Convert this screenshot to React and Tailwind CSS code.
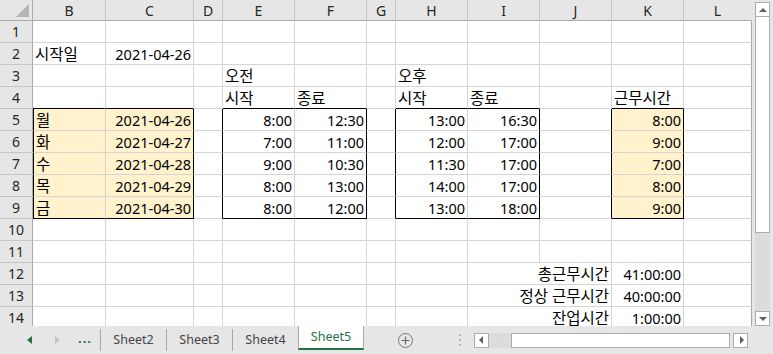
import React from 'react';

const COLS = ['B', 'C', 'D', 'E', 'F', 'G', 'H', 'I', 'J', 'K', 'L'];
const ROWS = [1, 2, 3, 4, 5, 6, 7, 8, 9, 10, 11, 12, 13, 14];

// ranges with a thin black outline
const BOXES = [
  { c1: 0, c2: 1, r1: 5, r2: 9 },
  { c1: 3, c2: 4, r1: 5, r2: 9 },
  { c1: 6, c2: 7, r1: 5, r2: 9 },
  { c1: 9, c2: 9, r1: 5, r2: 9 },
];

const CELLS = {
  '2B': ['시작일'], '2C': ['2021-04-26', 'r'],
  '3E': ['오전'], '3H': ['오후'],
  '4E': ['시작'], '4F': ['종료'], '4H': ['시작'], '4I': ['종료'], '4K': ['근무시간'],
  '5B': ['월'], '5C': ['2021-04-26', 'r'], '5E': ['8:00', 'r'], '5F': ['12:30', 'r'], '5H': ['13:00', 'r'], '5I': ['16:30', 'r'], '5K': ['8:00', 'r'],
  '6B': ['화'], '6C': ['2021-04-27', 'r'], '6E': ['7:00', 'r'], '6F': ['11:00', 'r'], '6H': ['12:00', 'r'], '6I': ['17:00', 'r'], '6K': ['9:00', 'r'],
  '7B': ['수'], '7C': ['2021-04-28', 'r'], '7E': ['9:00', 'r'], '7F': ['10:30', 'r'], '7H': ['11:30', 'r'], '7I': ['17:00', 'r'], '7K': ['7:00', 'r'],
  '8B': ['목'], '8C': ['2021-04-29', 'r'], '8E': ['8:00', 'r'], '8F': ['13:00', 'r'], '8H': ['14:00', 'r'], '8I': ['17:00', 'r'], '8K': ['8:00', 'r'],
  '9B': ['금'], '9C': ['2021-04-30', 'r'], '9E': ['8:00', 'r'], '9F': ['12:00', 'r'], '9H': ['13:00', 'r'], '9I': ['18:00', 'r'], '9K': ['9:00', 'r'],
  '12J': ['총근무시간', 'r'], '12K': ['41:00:00', 'r'],
  '13J': ['정상 근무시간', 'r'], '13K': ['40:00:00', 'r'],
  '14J': ['잔업시간', 'r'], '14K': ['1:00:00', 'r'],
};

const font = { fontFamily: '"Noto Sans", "Noto Sans CJK KR", sans-serif' };

function Cell({ r, c }) {
  const rightBlack = BOXES.some((b) => r >= b.r1 && r <= b.r2 && (c === b.c2 || c + 1 === b.c1));
  const bottomBlack = BOXES.some((b) => c >= b.c1 && c <= b.c2 && (r === b.r2 || r + 1 === b.r1));
  const leftBlack = c === 0 && r >= 5 && r <= 9;
  const yellow = (c <= 1 || c === 9) && r >= 5 && r <= 9;
  const merged = c === 7 && r >= 12;
  const last = c === 10;
  const cell = CELLS[`${r}${COLS[c]}`];
  const right = cell && cell[1] === 'r';
  const hangul = cell && /[가-힣]/.test(cell[0]);

  return (
    <div
      className={[
        'flex items-center min-w-0 whitespace-nowrap border-r border-b leading-[21px] text-black',
        hangul ? 'text-[15.5px]' : 'text-[14.5px]',
        right ? 'justify-end pr-[2px]' : 'justify-start pl-[2px]',
        rightBlack ? 'border-r-black' : merged ? 'border-r-transparent' : last ? 'border-r-[#a6a6a6]' : 'border-r-[#d4d4d4]',
        bottomBlack ? 'border-b-black' : 'border-b-[#d4d4d4]',
        leftBlack ? 'border-l border-l-black' : '',
        yellow ? 'bg-[#fff2cc]' : 'bg-white',
      ].join(' ')}
    >
      {cell ? <span className="leading-[16px]">{cell[0]}</span> : null}
    </div>
  );
}

function Arrow({ dir, color }) {
  return (
    <svg width="5" height="8" viewBox="0 0 5 8">
      {dir === 'left' ? <polygon points="5,0 5,8 0,4" fill={color} /> : <polygon points="0,0 0,8 5,4" fill={color} />}
    </svg>
  );
}

function ScrollButton({ dir }) {
  const pts = {
    up: '2,8 10,8 6,4',
    down: '2,4 10,4 6,8',
    left: '7,2 7,10 3,6',
    right: '5,2 5,10 9,6',
  }[dir];
  return (
    <div className="w-[15px] h-[15px] bg-white border border-[#ababab] flex items-center justify-center">
      <svg width="12" height="12" viewBox="0 0 12 12">
        <polygon points={pts} fill="#606060" />
      </svg>
    </div>
  );
}

export default function App() {
  return (
    <div className="w-[773px] h-[354px] bg-[#e6e6e6] flex flex-col overflow-hidden" style={font}>
      <div className="h-[326px] flex">
        <div className="w-[752px] h-[326px] overflow-hidden">
          <div className="grid grid-cols-[33px_73px_88px_29px_72px_72px_29px_72px_72px_72px_72px_68px] grid-rows-[21px_repeat(14,22px)]">
            <div className="bg-[#e6e6e6] border-r border-b border-[#ababab] flex items-end justify-end pr-[3px] pb-[3px]">
              <svg width="13" height="13" viewBox="0 0 13 13">
                <polygon points="13,0 13,13 0,13" fill="#b4b4b4" />
              </svg>
            </div>
            {COLS.map((k, i) => (
              <div
                key={k}
                className={`bg-[#e6e6e6] border-b border-b-[#ababab] border-r ${i === 10 ? 'border-r-transparent' : 'border-r-[#c6c6c6]'} flex items-center justify-center text-[14px] text-[#262626]`}
              >
                {k}
              </div>
            ))}
            {ROWS.map((r) => (
              <React.Fragment key={r}>
                <div className="bg-[#e6e6e6] border-r border-r-[#ababab] border-b border-b-[#c6c6c6] flex items-center justify-center text-[14px] text-[#262626]">
                  {r}
                </div>
                {COLS.map((k, c) => (
                  <Cell key={k} r={r} c={c} />
                ))}
              </React.Fragment>
            ))}
          </div>
        </div>
        <div className="w-[21px] flex flex-col items-start pl-[3px] pt-[2px] pb-[0px]">
          <ScrollButton dir="up" />
          <div className="w-[15px] h-[216px] bg-white border-x border-[#ababab] border-b" />
          <div className="w-[15px] flex-1 bg-[#dcdcdc]" />
          <ScrollButton dir="down" />
        </div>
      </div>

      <div className="h-[28px] flex items-start text-[12.5px]">
        <div className="w-[100px] h-[28px] flex items-center">
          <div className="ml-[27px] flex items-center"><Arrow dir="left" color="#217346" /></div>
          <div className="ml-[23px] flex items-center"><Arrow dir="right" color="#c4c4c4" /></div>
          <div className="ml-[18px] text-[#217346] font-bold text-[13px] tracking-[1px] leading-none pb-[4px]">...</div>
        </div>
        {['Sheet2', 'Sheet3', 'Sheet4'].map((s) => (
          <div key={s} className="w-[66px] h-[28px] flex items-center">
            <div className="w-px h-[22px] bg-[#a6a6a6]" />
            <div className="flex-1 text-center text-[#444444]">{s}</div>
          </div>
        ))}
        <div className="w-[66px] h-[24px] bg-white border-x border-[#a6a6a6] border-b-2 border-b-[#217346] flex items-center justify-center text-[#217346]">
          Sheet5
        </div>
        <div className="ml-[34px] h-[28px] flex items-center">
          <div className="w-[15px] h-[15px] rounded-full border border-[#7a7a7a] flex items-center justify-center">
            <svg width="9" height="9" viewBox="0 0 9 9">
              <path d="M4.5 0.5v8M0.5 4.5h8" stroke="#6a6a6a" strokeWidth="1.2" />
            </svg>
          </div>
        </div>
        <div className="ml-[46px] h-[28px] flex flex-col items-center justify-center gap-[3px]">
          <div className="w-[2px] h-[2px] bg-[#b8b8b8]" />
          <div className="w-[2px] h-[2px] bg-[#b8b8b8]" />
          <div className="w-[2px] h-[2px] bg-[#b8b8b8]" />
        </div>
        <div className="ml-[13px] h-[28px] flex items-center">
          <ScrollButton dir="left" />
          <div className="w-[22px] h-[15px] bg-[#dcdcdc]" />
          <div className="w-[219px] h-[15px] bg-white border border-[#ababab]" />
          <div className="w-[3px]" />
          <ScrollButton dir="right" />
        </div>
      </div>
    </div>
  );
}
